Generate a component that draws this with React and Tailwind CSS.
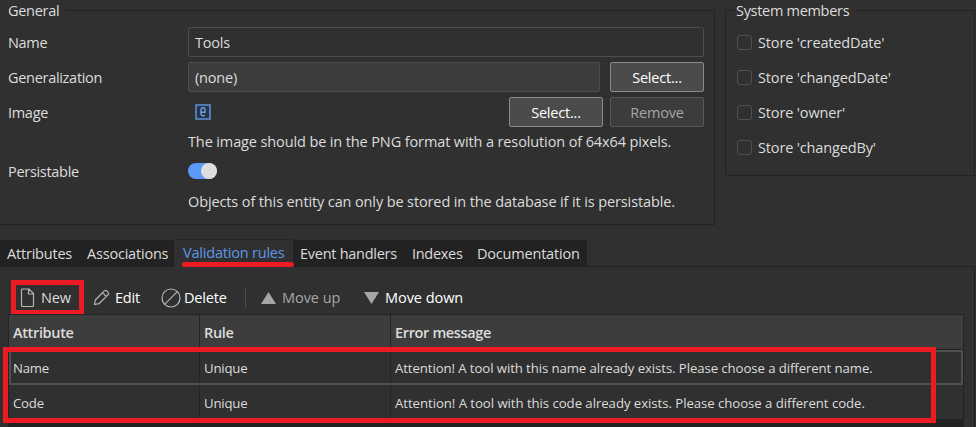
import React from "react";

const BUTTON = "h-[30px] w-[94px] rounded-[2px] border text-center leading-[29px]";

function Field({ label, children, className = "" }) {
  return (
    <div className={`flex ${className}`}>
      <div className="w-[180px] leading-[31px] tracking-[-0.3px]">{label}</div>
      {children}
    </div>
  );
}

function General() {
  return (
    <section className="mt-[10px] h-[215px] w-[715px] border-y border-r border-[#232323] pl-2">
      <h2 className="-mt-[11px] -ml-2 h-[22px] w-[66px] bg-[#303030] pl-2 leading-[22px] tracking-[-0.3px]">General</h2>
      <Field label="Name" className="mt-[5px] h-[30px]">
        <div className="h-[30px] w-[516px] rounded-[2px] border border-[#4d4d4d] pl-1.5 leading-[30px]">Tools</div>
      </Field>
      <Field label="Generalization" className="mt-[5px] h-[30px]">
        <div className="h-[30px] w-[412px] rounded-[2px] border border-[#4d4d4d] bg-[#3c3c3c] pl-1.5 leading-[30px]">(none)</div>
        <div className={`${BUTTON} ml-[10px] border-[#8a8a8a] bg-[#4b4b4b] text-white`}>Select...</div>
      </Field>
      <Field label="Image" className="mt-[5px] h-[30px]">
        <svg className="mt-[7px] ml-[7px]" width="16" height="16" fill="none">
          <rect x="1" y="1" width="14" height="14" fill="#283547" stroke="#5b92dc" strokeWidth="1.5" />
          <path d="M6 8.300h4V6c0-1.500-.7-2.200-2-2.200S6 4.500 6 6v3.500c0 1.600.7 2.300 2.200 2.300.6 0 1.100-.1 1.600-.4" stroke="#6f9fe0" strokeWidth="1.4" />
        </svg>
        <div className={`${BUTTON} ml-[298px] border-[#8a8a8a] bg-[#4b4b4b] text-white`}>Select...</div>
        <div className={`${BUTTON} ml-[7px] border-[#595959] bg-[#3c3c3c] text-[#a6a6a6]`}>Remove</div>
      </Field>
      <p className="mt-1 ml-[180px] h-[22px] leading-[22px] tracking-[-0.12px] whitespace-nowrap">The image should be in the PNG format with a resolution of 64x64 pixels.</p>
      <Field label="Persistable" className="mt-[3px] h-[30px]">
        <div className="mt-[7px] flex h-4 w-[29px] justify-end rounded-full bg-[#5b9bf5]">
          <div className="h-4 w-4 rounded-full bg-[#dedede]" />
        </div>
      </Field>
      <p className="mt-[5px] ml-[180px] leading-[22px] tracking-[-0.12px] whitespace-nowrap">Objects of this entity can only be stored in the database if it is persistable.</p>
    </section>
  );
}

function SystemMembers() {
  return (
    <section className="mt-[10px] ml-[10px] h-[166px] w-[250px] border border-[#232323] pl-[11px]">
      <h2 className="-mt-[11px] -ml-[3px] h-[22px] w-[122px] bg-[#303030] pl-0.5 leading-[22px] tracking-[-0.3px]">System members</h2>
      <div className="mt-[5px] flex flex-col gap-[5px]">
        {["createdDate", "changedDate", "owner", "changedBy"].map((name) => (
          <div key={name} className="flex h-[30px] items-center gap-[6px] tracking-[-0.15px]">
            <div className="h-[15px] w-[15px] rounded-[3px] border border-[#505050]" />
            <span className="leading-[31px]">Store '{name}'</span>
          </div>
        ))}
      </div>
    </section>
  );
}

function Tabs() {
  return (
    <nav className="mt-[14px] flex h-7 items-end leading-[27px] whitespace-nowrap">
      <div className="flex h-[27px] w-[174px] bg-[#222] pl-[7px]">
        <span className="w-20">Attributes</span>
        <span>Associations</span>
      </div>
      <div className="relative h-7 w-[119px] border-t border-[#262626] pl-[9px] leading-[26px] text-[#5f97e8]">
        Validation rules
        <div className="absolute top-[22px] left-[8px] h-[5px] w-[112px] rounded-full bg-[#ed1c24]" />
      </div>
      <div className="flex h-[27px] w-[294px] bg-[#222] pl-[7px]">
        <span className="w-[112px] tracking-[-0.27px]">Event handlers</span>
        <span className="w-[65px] tracking-[-0.3px]">Indexes</span>
        <span>Documentation</span>
      </div>
      <div className="h-px w-[388px] bg-[#222]" />
    </nav>
  );
}

function Toolbar() {
  return (
    <div className="flex h-[35px] items-center pl-[11px] text-white">
      <div className="flex h-[35px] w-[73px] items-center border-[5px] border-[#ed1c24] pl-[4px]">
        <svg width="15" height="20" fill="none" stroke="#b5b5b5" strokeWidth="1.2">
          <path d="M2.500 1h6.500l4.500 4.500V17.500a1 1 0 0 1-1 1h-10a1 1 0 0 1-1-1V2a1 1 0 0 1 1-1zM8.500 1v5h5" />
        </svg>
        <span className="ml-[6px] text-[#dcdcdc]">New</span>
      </div>
      <svg className="ml-[9px]" width="17" height="17" fill="none" stroke="#b5b5b5" strokeWidth="1.2" strokeLinejoin="round">
        <path d="M1.500 15.500l.8-4.500L11.300 1.800a1.500 1.500 0 0 1 2.100 0l1.800 1.800a1.500 1.500 0 0 1 0 2.100L6 14.700zM9.500 3.600l3.900 3.900" />
      </svg>
      <span className="ml-[5px] w-[46px]">Edit</span>
      <svg width="20" height="20" fill="none" stroke="#b5b5b5" strokeWidth="1.2">
        <circle cx="10" cy="10" r="9" />
        <path d="M3.7 16.3L16.3 3.7" />
      </svg>
      <span className="ml-[3px] w-[61px]">Delete</span>
      <div className="h-5 w-px bg-[#4c4c4c]" />
      <svg className="ml-[15px]" width="15" height="12"><path d="M7.5 0L15 12H0z" fill="#a6a6a6" /></svg>
      <span className="ml-[6px] w-[82px] tracking-[-0.05px] text-[#a6a6a6]">Move up</span>
      <svg width="15" height="12"><path d="M0 0h15L7.5 12z" fill="#a6a6a6" /></svg>
      <span className="ml-[6px] tracking-[-0.05px]">Move down</span>
    </div>
  );
}

function Table() {
  const cols = "grid grid-cols-[191px_191px_1fr]";
  const cell = "border-r border-[#232323] pl-1";
  return (
    <div className="relative -mt-px ml-2 h-[113px] w-[956px] border border-b-0 border-[#232323] bg-[#222]">
      <div className={`${cols} h-[35px] border-b border-[#232323] bg-[#3d3d3d] leading-[35px] font-semibold tracking-[-0.35px]`}>
        <div className={cell}>Attribute</div>
        <div className={cell}>Rule</div>
        <div className="pl-1">Error message</div>
      </div>
      <div className={`${cols} relative h-[35px] bg-[#303030] text-[13.2px] leading-[36px]`}>
        <div className={cell}>Name</div>
        <div className={cell}>Unique</div>
        <div className="pl-1 tracking-[-0.085px]">Attention! A tool with this name already exists. Please choose a different name.</div>
        <div className="absolute inset-0 border-2 border-[#505050]" />
      </div>
      <div className={`${cols} h-[34px] bg-[#303030] text-[13.2px] leading-[36px]`}>
        <div className={cell}>Code</div>
        <div className={cell}>Unique</div>
        <div className="pl-1 tracking-[-0.05px]">Attention! A tool with this code already exists. Please choose a different code.</div>
      </div>
      <div className="absolute top-[32px] -left-[6px] h-[76px] w-[933px] border-[5px] border-[#ed1c24]" />
    </div>
  );
}

export default function App() {
  return (
    <main className="h-[427px] w-[976px] overflow-hidden bg-[#303030] font-['Open_Sans','Noto_Sans',sans-serif] text-[14.5px] tracking-[-0.2px] text-[#dcdcdc]">
      <div className="flex">
        <General />
        <SystemMembers />
      </div>
      <Tabs />
      <div className="h-[160px] w-[975px] border-r border-[#222] pt-[13px]">
        <Toolbar />
        <Table />
      </div>
    </main>
  );
}
